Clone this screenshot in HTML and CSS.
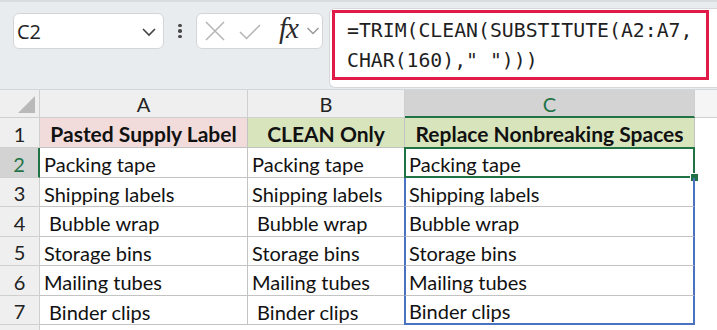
FILE: index.html
```
<!DOCTYPE html>
<html>
<head>
<meta charset="utf-8">
<link rel="stylesheet" href="styles.css">
</head>
<body>
<div class="app">
  <div class="toolbar">
    <div class="namebox">
      <span class="name">C2</span>
      <svg class="chev" width="16" height="10" viewBox="0 0 16 10"><polyline points="2,2 8,8 14,2" fill="none" stroke="#444" stroke-width="1.6"/></svg>
    </div>
    <div class="dots"><span></span><span></span><span></span></div>
    <div class="btngroup">
      <svg class="ico x" width="20" height="20" viewBox="0 0 20 20"><path d="M1 1 L19 19 M19 1 L1 19" stroke="#b4b4b4" stroke-width="1.5" fill="none"/></svg>
      <svg class="ico ok" width="22" height="16" viewBox="0 0 22 16"><polyline points="1,8 7.5,14.5 21,1" stroke="#b4b4b4" stroke-width="1.5" fill="none"/></svg>
      <span class="fx">fx</span>
      <svg class="chev2" width="14" height="10" viewBox="0 0 14 10"><polyline points="1.5,2 7,7.5 12.5,2" fill="none" stroke="#9a9a9a" stroke-width="1.5"/></svg>
    </div>
    <div class="fbar">
      <div class="formula">=TRIM(CLEAN(SUBSTITUTE(A2:A7,<br>CHAR(160)," ")))</div>
    </div>
  </div>
  <div class="sheet">
    <div class="corner"><span class="tri"></span></div>
    <div class="ch">A</div>
    <div class="ch">B</div>
    <div class="ch sel">C</div>
    <div class="ch rest"></div>

    <div class="rh">1</div>
    <div class="c h pink">Pasted Supply Label</div>
    <div class="c h green">CLEAN Only</div>
    <div class="c h green">Replace Nonbreaking Spaces</div>
    <div class="e"></div>

    <div class="rh selr">2</div>
    <div class="c">Packing tape</div>
    <div class="c">Packing tape</div>
    <div class="c cc active">Packing tape<span class="handle"></span></div>
    <div class="e"></div>

    <div class="rh">3</div>
    <div class="c">Shipping labels</div>
    <div class="c">Shipping labels</div>
    <div class="c cc">Shipping labels</div>
    <div class="e"></div>

    <div class="rh">4</div>
    <div class="c">&nbsp;Bubble wrap</div>
    <div class="c">&nbsp;Bubble wrap</div>
    <div class="c cc">Bubble wrap</div>
    <div class="e"></div>

    <div class="rh">5</div>
    <div class="c">Storage bins</div>
    <div class="c">Storage bins</div>
    <div class="c cc">Storage bins</div>
    <div class="e"></div>

    <div class="rh">6</div>
    <div class="c">Mailing tubes</div>
    <div class="c">Mailing tubes</div>
    <div class="c cc">Mailing tubes</div>
    <div class="e"></div>

    <div class="rh">7</div>
    <div class="c">&nbsp;Binder clips</div>
    <div class="c">&nbsp;Binder clips</div>
    <div class="c cc last">Binder clips</div>
    <div class="e"></div>

    <div class="rh blank"></div>
    <div class="e"></div>
    <div class="e"></div>
    <div class="e"></div>
    <div class="e"></div>
  </div>
</div>
</body>
</html>
```

FILE: styles.css
```
* { box-sizing: border-box; }
html, body { margin: 0; padding: 0; }
body { width: 717px; height: 330px; overflow: hidden; background: #fff; }
.app { width: 717px; height: 330px; display: flex; flex-direction: column; }

.toolbar {
  height: 90px;
  flex: none;
  background: #e9ecef;
  border-top: 2px solid #d9dcdf;
  border-bottom: 1px solid #d4d7da;
  display: flex;
  align-items: flex-start;
  padding: 11px 0 0 13px;
}
.namebox {
  width: 151px; height: 36px;
  background: #fff;
  border: 1px solid #d3d5d8;
  border-radius: 6px;
  display: flex; align-items: center; justify-content: space-between;
  padding: 0 6px 0 3px;
}
.name { font-family: "Open Sans", sans-serif; font-size: 20px; color: #222; }
.chev { margin-top: 1px; }
.dots {
  width: 32px; height: 36px;
  display: flex; flex-direction: column; align-items: center; justify-content: center; gap: 2px;
}
.dots span { width: 3.5px; height: 3.5px; border-radius: 50%; background: #4a4a4a; }
.btngroup {
  width: 127px; height: 36px;
  background: #fff;
  border: 1px solid #d3d5d8;
  border-radius: 6px;
  display: flex; align-items: center;
  padding-left: 8px;
}
.btngroup .x { margin-right: 14px; }
.btngroup .ok { margin-right: 18px; margin-top: 1px; }
.fx {
  font-family: "Liberation Serif", serif; font-style: italic; font-size: 29px;
  color: #2b2b2b; line-height: 1; margin-top: -5px; letter-spacing: -1px;
}
.chev2 { margin-left: 8px; }
.fbar {
  margin-left: 6px;
  margin-top: -5px;
  flex: 1;
  height: 80px;
  background: #fff;
  border: 1px solid #d6d8db;
  border-right: none;
  border-radius: 6px 0 0 6px;
  padding: 1px 6px 0 2px;
}
.formula {
  width: 377px; height: 70px;
  border: 3px solid #e11b48;
  font-family: "DejaVu Sans Mono", monospace;
  font-size: 19.8px;
  line-height: 29.5px;
  color: #1f1f1f;
  padding: 3px 0 0 12px;
  white-space: nowrap;
}

.sheet {
  flex: 1;
  display: grid;
  grid-template-columns: 40px 208px 157px 290px 1fr;
  grid-template-rows: 28px 30px 30px 29px 30px 29px 30px 29px 1fr;
  font-family: Lato, sans-serif;
  color: #111;
}
.corner {
  background: #efefef;
  border-right: 1px solid #cfcfcf;
  border-bottom: 1px solid #cfcfcf;
  position: relative;
}
.tri {
  position: absolute; right: 4px; bottom: 4px;
  width: 0; height: 0;
  border-left: 17px solid transparent;
  border-bottom: 17px solid #b9b9b9;
}
.ch {
  background: #efefef;
  border-right: 1px solid #cfcfcf;
  border-bottom: 1px solid #cfcfcf;
  display: flex; align-items: center; justify-content: center;
  font-size: 20px; color: #222;
  padding-top: 1px;
}
.ch.sel { background: #d3d3d3; color: #217346; border-bottom: 2px solid #217346; }
.ch.rest { background: #f5f5f5; border-right: none; }
.rh {
  background: #efefef;
  border-right: 1px solid #cfcfcf;
  border-bottom: 1px solid #cfcfcf;
  display: flex; align-items: center; justify-content: center;
  font-size: 20px; color: #222;
  padding-top: 2px;
}
.rh.selr { background: #d3d3d3; color: #217346; border-right: 2px solid #217346; }
.rh.blank { border-bottom: none; }
.c {
  border-right: 1px solid #c3c3c3;
  border-bottom: 1px solid #c3c3c3;
  display: flex; align-items: center;
  padding-left: 4px;
  padding-top: 3px;
  font-size: 20px;
  white-space: pre;
  position: relative;
}
.c.h { font-weight: 700; justify-content: center; padding-left: 0; padding-top: 1px; font-size: 21px; }
.pink { background: #f2dcdb; }
.green { background: #d8e4bc; }
.c.cc {
  border-left: 2px solid #4a72c0;
  border-right: 2px solid #4a72c0;
  margin-left: -1px;
  padding-left: 3px;
}
.c.last { border-bottom: 2px solid #4a72c0; }
.c.active {
  border: 2px solid #217346;
  margin-top: -1px;
}
.handle {
  position: absolute; right: -5px; bottom: -5px;
  width: 7px; height: 7px;
  background: #217346;
  outline: 1px solid #fff;
}
.e { background: #fff; }
```
